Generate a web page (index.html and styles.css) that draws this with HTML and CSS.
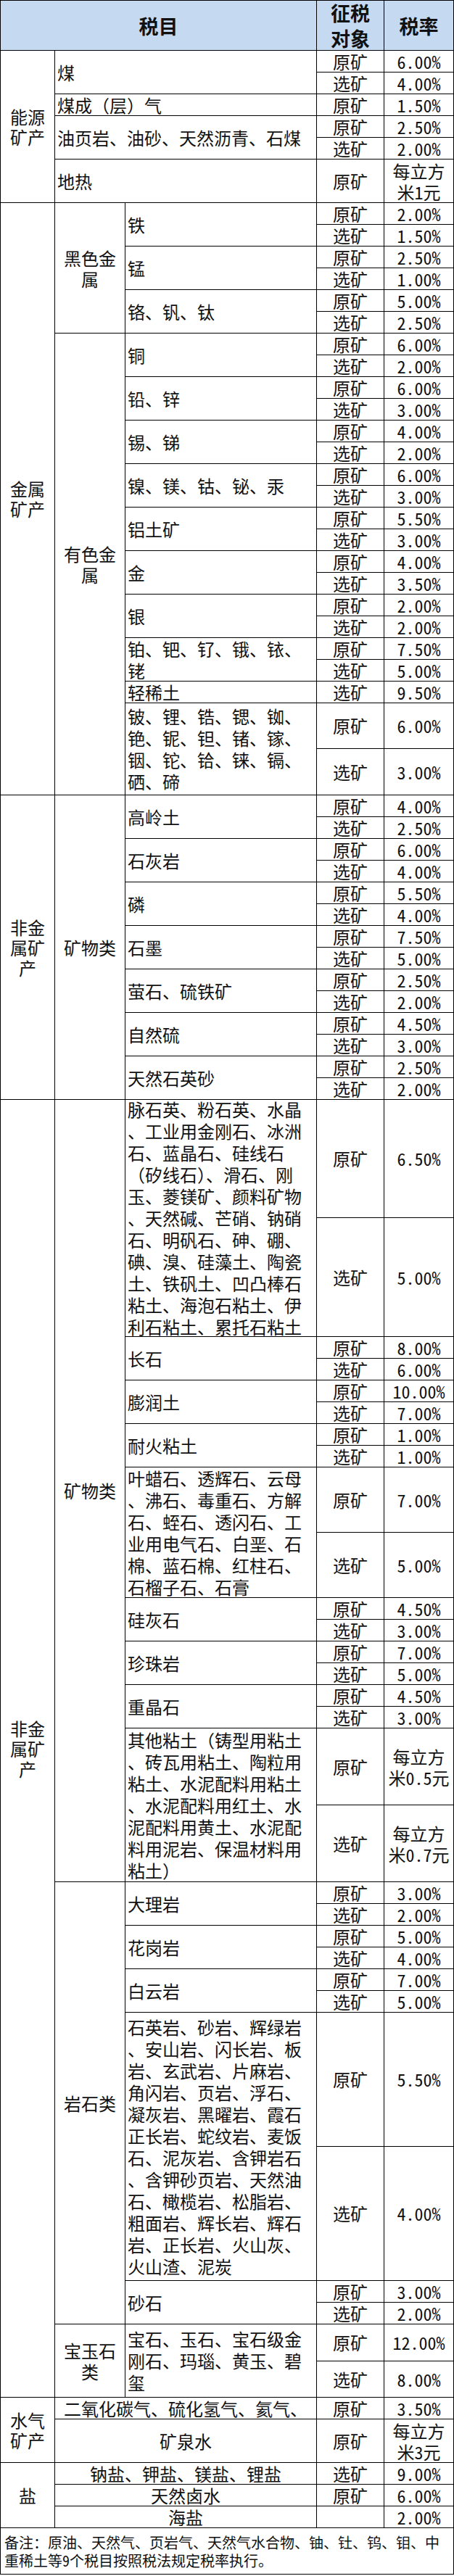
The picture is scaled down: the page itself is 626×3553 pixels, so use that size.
FILE: index.html
```html
<!DOCTYPE html>
<html lang="zh-CN">
<head>
<meta charset="utf-8">
<title>资源税税目税率表</title>
<link rel="stylesheet" href="styles.css">
</head>
<body>
<div class="sheet">
  <div class="cell head c13">税目</div>
  <div class="cell head c4">征税<br>对象</div>
  <div class="cell head c5">税率</div>

  <div class="cell lab1 c1 s6">能源<br>矿产</div>
  <div class="cell left c23 s2">煤</div>
  <div class="cell c4">原矿</div><div class="cell c5">6.00%</div>
  <div class="cell c4">选矿</div><div class="cell c5">4.00%</div>
  <div class="cell left c23">煤成（层）气</div>
  <div class="cell c4">原矿</div><div class="cell c5">1.50%</div>
  <div class="cell left c23 s2">油页岩、油砂、天然沥青、石煤</div>
  <div class="cell c4">原矿</div><div class="cell c5">2.50%</div>
  <div class="cell c4">选矿</div><div class="cell c5">2.00%</div>
  <div class="cell left c23">地热</div>
  <div class="cell c4">原矿</div><div class="cell c5 lab2">每立方<br>米1元</div>

  <div class="cell lab1 c1 s25">金属<br>矿产</div>
  <div class="cell lab2 c2 s6">黑色金<br>属</div>
  <div class="cell left c3 s2">铁</div>
  <div class="cell c4">原矿</div><div class="cell c5">2.00%</div>
  <div class="cell c4">选矿</div><div class="cell c5">1.50%</div>
  <div class="cell left c3 s2">锰</div>
  <div class="cell c4">原矿</div><div class="cell c5">2.50%</div>
  <div class="cell c4">选矿</div><div class="cell c5">1.00%</div>
  <div class="cell left c3 s2">铬、钒、钛</div>
  <div class="cell c4">原矿</div><div class="cell c5">5.00%</div>
  <div class="cell c4">选矿</div><div class="cell c5">2.50%</div>

  <div class="cell lab2 c2 s19">有色金<br>属</div>
  <div class="cell left c3 s2">铜</div>
  <div class="cell c4">原矿</div><div class="cell c5">6.00%</div>
  <div class="cell c4">选矿</div><div class="cell c5">2.00%</div>
  <div class="cell left c3 s2">铅、锌</div>
  <div class="cell c4">原矿</div><div class="cell c5">6.00%</div>
  <div class="cell c4">选矿</div><div class="cell c5">3.00%</div>
  <div class="cell left c3 s2">锡、锑</div>
  <div class="cell c4">原矿</div><div class="cell c5">4.00%</div>
  <div class="cell c4">选矿</div><div class="cell c5">2.00%</div>
  <div class="cell left c3 s2">镍、镁、钴、铋、汞</div>
  <div class="cell c4">原矿</div><div class="cell c5">6.00%</div>
  <div class="cell c4">选矿</div><div class="cell c5">3.00%</div>
  <div class="cell left c3 s2">铝土矿</div>
  <div class="cell c4">原矿</div><div class="cell c5">5.50%</div>
  <div class="cell c4">选矿</div><div class="cell c5">3.00%</div>
  <div class="cell left c3 s2">金</div>
  <div class="cell c4">原矿</div><div class="cell c5">4.00%</div>
  <div class="cell c4">选矿</div><div class="cell c5">3.50%</div>
  <div class="cell left c3 s2">银</div>
  <div class="cell c4">原矿</div><div class="cell c5">2.00%</div>
  <div class="cell c4">选矿</div><div class="cell c5">2.00%</div>
  <div class="cell left c3 s2">铂、钯、钌、锇、铱、<br>铑</div>
  <div class="cell c4">原矿</div><div class="cell c5">7.50%</div>
  <div class="cell c4">选矿</div><div class="cell c5">5.00%</div>
  <div class="cell left c3">轻稀土</div>
  <div class="cell c4">选矿</div><div class="cell c5">9.50%</div>
  <div class="cell left c3 s2">铍、锂、锆、锶、铷、<br>铯、铌、钽、锗、镓、<br>铟、铊、铪、铼、镉、<br>硒、碲</div>
  <div class="cell c4">原矿</div><div class="cell c5">6.00%</div>
  <div class="cell c4">选矿</div><div class="cell c5">3.00%</div>

  <div class="cell lab1 c1 s14">非金<br>属矿<br>产</div>
  <div class="cell c2 s14">矿物类</div>
  <div class="cell left c3 s2">高岭土</div>
  <div class="cell c4">原矿</div><div class="cell c5">4.00%</div>
  <div class="cell c4">选矿</div><div class="cell c5">2.50%</div>
  <div class="cell left c3 s2">石灰岩</div>
  <div class="cell c4">原矿</div><div class="cell c5">6.00%</div>
  <div class="cell c4">选矿</div><div class="cell c5">4.00%</div>
  <div class="cell left c3 s2">磷</div>
  <div class="cell c4">原矿</div><div class="cell c5">5.50%</div>
  <div class="cell c4">选矿</div><div class="cell c5">4.00%</div>
  <div class="cell left c3 s2">石墨</div>
  <div class="cell c4">原矿</div><div class="cell c5">7.50%</div>
  <div class="cell c4">选矿</div><div class="cell c5">5.00%</div>
  <div class="cell left c3 s2">萤石、硫铁矿</div>
  <div class="cell c4">原矿</div><div class="cell c5">2.50%</div>
  <div class="cell c4">选矿</div><div class="cell c5">2.00%</div>
  <div class="cell left c3 s2">自然硫</div>
  <div class="cell c4">原矿</div><div class="cell c5">4.50%</div>
  <div class="cell c4">选矿</div><div class="cell c5">3.00%</div>
  <div class="cell left c3 s2">天然石英砂</div>
  <div class="cell c4">原矿</div><div class="cell c5">2.50%</div>
  <div class="cell c4">选矿</div><div class="cell c5">2.00%</div>

  <div class="cell lab1 c1 s30">非金<br>属矿<br>产</div>
  <div class="cell c2 s18">矿物类</div>
  <div class="cell left c3 s2">脉石英、粉石英、水晶<br>、工业用金刚石、冰洲<br>石、蓝晶石、硅线石<br>（矽线石）、滑石、刚<br>玉、菱镁矿、颜料矿物<br>、天然碱、芒硝、钠硝<br>石、明矾石、砷、硼、<br>碘、溴、硅藻土、陶瓷<br>土、铁矾土、凹凸棒石<br>粘土、海泡石粘土、伊<br>利石粘土、累托石粘土</div>
  <div class="cell c4">原矿</div><div class="cell c5">6.50%</div>
  <div class="cell c4">选矿</div><div class="cell c5">5.00%</div>
  <div class="cell left c3 s2">长石</div>
  <div class="cell c4">原矿</div><div class="cell c5">8.00%</div>
  <div class="cell c4">选矿</div><div class="cell c5">6.00%</div>
  <div class="cell left c3 s2">膨润土</div>
  <div class="cell c4">原矿</div><div class="cell c5">10.00%</div>
  <div class="cell c4">选矿</div><div class="cell c5">7.00%</div>
  <div class="cell left c3 s2">耐火粘土</div>
  <div class="cell c4">原矿</div><div class="cell c5">1.00%</div>
  <div class="cell c4">选矿</div><div class="cell c5">1.00%</div>
  <div class="cell left c3 s2">叶蜡石、透辉石、云母<br>、沸石、毒重石、方解<br>石、蛭石、透闪石、工<br>业用电气石、白垩、石<br>棉、蓝石棉、红柱石、<br>石榴子石、石膏</div>
  <div class="cell c4">原矿</div><div class="cell c5">7.00%</div>
  <div class="cell c4">选矿</div><div class="cell c5">5.00%</div>
  <div class="cell left c3 s2">硅灰石</div>
  <div class="cell c4">原矿</div><div class="cell c5">4.50%</div>
  <div class="cell c4">选矿</div><div class="cell c5">3.00%</div>
  <div class="cell left c3 s2">珍珠岩</div>
  <div class="cell c4">原矿</div><div class="cell c5">7.00%</div>
  <div class="cell c4">选矿</div><div class="cell c5">5.00%</div>
  <div class="cell left c3 s2">重晶石</div>
  <div class="cell c4">原矿</div><div class="cell c5">4.50%</div>
  <div class="cell c4">选矿</div><div class="cell c5">3.00%</div>
  <div class="cell left c3 s2">其他粘土（铸型用粘土<br>、砖瓦用粘土、陶粒用<br>粘土、水泥配料用粘土<br>、水泥配料用红土、水<br>泥配料用黄土、水泥配<br>料用泥岩、保温材料用<br>粘土）</div>
  <div class="cell c4">原矿</div><div class="cell c5 lab2">每立方<br>米0.5元</div>
  <div class="cell c4">选矿</div><div class="cell c5 lab2">每立方<br>米0.7元</div>

  <div class="cell c2 s10">岩石类</div>
  <div class="cell left c3 s2">大理岩</div>
  <div class="cell c4">原矿</div><div class="cell c5">3.00%</div>
  <div class="cell c4">选矿</div><div class="cell c5">2.00%</div>
  <div class="cell left c3 s2">花岗岩</div>
  <div class="cell c4">原矿</div><div class="cell c5">5.00%</div>
  <div class="cell c4">选矿</div><div class="cell c5">4.00%</div>
  <div class="cell left c3 s2">白云岩</div>
  <div class="cell c4">原矿</div><div class="cell c5">7.00%</div>
  <div class="cell c4">选矿</div><div class="cell c5">5.00%</div>
  <div class="cell left c3 s2">石英岩、砂岩、辉绿岩<br>、安山岩、闪长岩、板<br>岩、玄武岩、片麻岩、<br>角闪岩、页岩、浮石、<br>凝灰岩、黑曜岩、霞石<br>正长岩、蛇纹岩、麦饭<br>石、泥灰岩、含钾岩石<br>、含钾砂页岩、天然油<br>石、橄榄岩、松脂岩、<br>粗面岩、辉长岩、辉石<br>岩、正长岩、火山灰、<br>火山渣、泥炭</div>
  <div class="cell c4">原矿</div><div class="cell c5">5.50%</div>
  <div class="cell c4">选矿</div><div class="cell c5">4.00%</div>
  <div class="cell left c3 s2">砂石</div>
  <div class="cell c4">原矿</div><div class="cell c5">3.00%</div>
  <div class="cell c4">选矿</div><div class="cell c5">2.00%</div>

  <div class="cell lab2 c2 s2">宝玉石<br>类</div>
  <div class="cell left c3 s2">宝石、玉石、宝石级金<br>刚石、玛瑙、黄玉、碧<br>玺</div>
  <div class="cell c4">原矿</div><div class="cell c5">12.00%</div>
  <div class="cell c4">选矿</div><div class="cell c5">8.00%</div>

  <div class="cell lab1 c1 s2">水气<br>矿产</div>
  <div class="cell c23">二氧化碳气、硫化氢气、氦气、</div>
  <div class="cell c4">原矿</div><div class="cell c5">3.50%</div>
  <div class="cell c23">矿泉水</div>
  <div class="cell c4">原矿</div><div class="cell c5 lab2">每立方<br>米3元</div>

  <div class="cell lab1 c1 s3">盐</div>
  <div class="cell c23">钠盐、钾盐、镁盐、锂盐</div>
  <div class="cell c4">选矿</div><div class="cell c5">9.00%</div>
  <div class="cell c23">天然卤水</div>
  <div class="cell c4">原矿</div><div class="cell c5">6.00%</div>
  <div class="cell c23">海盐</div>
  <div class="cell c4"></div><div class="cell c5">2.00%</div>

  <div class="cell note c15">备注：原油、天然气、页岩气、天然气水合物、铀、钍、钨、钼、中<br>重稀土等9个税目按照税法规定税率执行。</div>
</div>
</body>
</html>
```

FILE: styles.css
```css
html, body {
  margin: 0;
  padding: 0;
  background: #ffffff;
}

.sheet {
  display: grid;
  width: 626px;
  box-sizing: border-box;
  border: 1px solid #000;
  background: #000;
  gap: 1px;
  grid-template-columns: 74px 96px 263px 92px 95px;
  grid-template-rows:
    68px
    repeat(5, 29px) 59px
    repeat(23, 29px) 62px 63px
    repeat(14, 29px)
    162px 163px
    repeat(6, 29px)
    89px 89px
    repeat(6, 29px)
    105px 105px
    repeat(6, 29px)
    184px 184px
    repeat(2, 29px)
    50px 49px
    29px 59px
    repeat(3, 29px)
    63px;
  font-family: "Noto Sans Mono CJK SC", "Noto Sans CJK SC", "DejaVu Sans Mono", monospace;
  font-size: 24px;
  line-height: 30px;
  color: #111;
}

.cell {
  background: #fff;
  display: flex;
  align-items: center;
  justify-content: center;
  text-align: center;
  overflow: visible;
  white-space: nowrap;
}

.left {
  justify-content: flex-start;
  text-align: left;
  padding-left: 3px;
}

.head {
  background: #c5d9f1;
  font-weight: 700;
  font-size: 27px;
  line-height: 35px;
}

.lab1 {
  line-height: 28px;
}

.lab2 {
  line-height: 29px;
}

.note {
  font-size: 20px;
  line-height: 25px;
  justify-content: flex-start;
  text-align: left;
  padding-left: 5px;
}

.c1 { grid-column: 1; }
.c2 { grid-column: 2; }
.c3 { grid-column: 3; }
.c4 { grid-column: 4; }
.c5 { grid-column: 5; }
.c23 { grid-column: 2 / 4; }
.c13 { grid-column: 1 / 4; }
.c15 { grid-column: 1 / 6; }

.s2 { grid-row: span 2; }
.s3 { grid-row: span 3; }
.s6 { grid-row: span 6; }
.s10 { grid-row: span 10; }
.s14 { grid-row: span 14; }
.s18 { grid-row: span 18; }
.s19 { grid-row: span 19; }
.s25 { grid-row: span 25; }
.s30 { grid-row: span 30; }
```
